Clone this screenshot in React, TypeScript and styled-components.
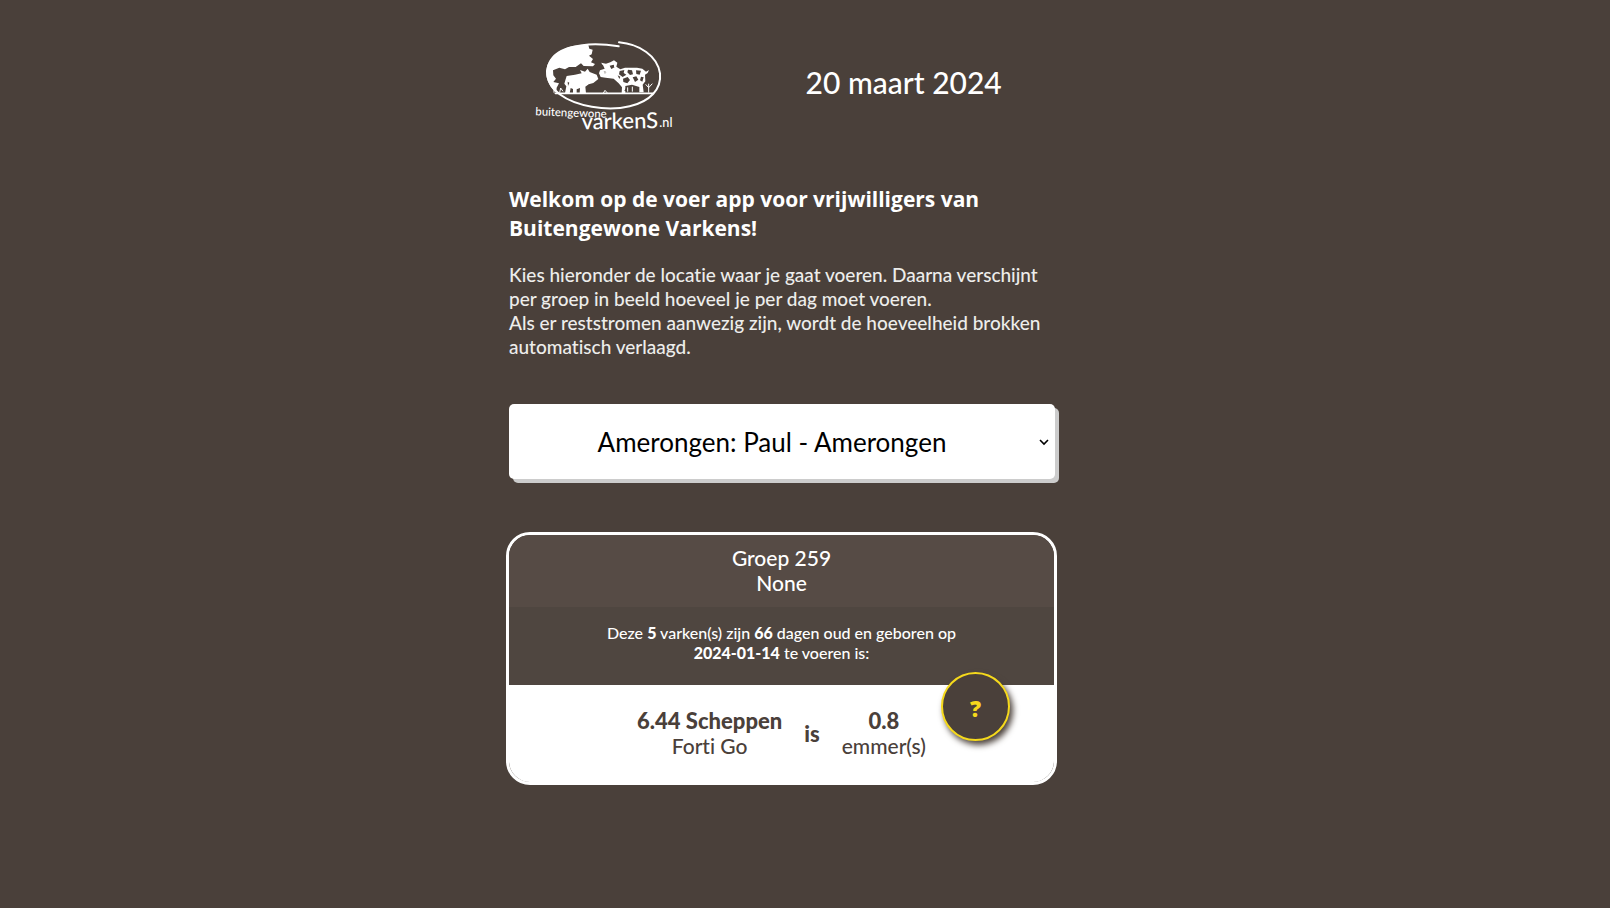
import React, { useState } from "react";
import styled, { createGlobalStyle } from "styled-components";

const brown = "#4a403a";
const yellow = "#f5d91c";
const bodyFont = `"Gill Sans MT", Lato, "Liberation Sans", sans-serif`;
const headingFont = `"Segoe UI", "Open Sans", "Noto Sans", sans-serif`;

const GlobalStyle = createGlobalStyle`
  *, *::before, *::after { box-sizing: border-box; }
  body {
    margin: 0;
    background: ${brown};
    color: #fff;
    font-family: ${bodyFont};
    font-weight: 500;
    font-variant-ligatures: none;
  }
`;

const Page = styled.div`
  max-width: 592px;
  margin: 0 auto;
  padding: 30px 0;
`;

const Header = styled.header`
  display: grid;
  grid-template-columns: 1fr 2fr;
  justify-items: center;
  align-items: center;
  height: 104px;
`;

const LogoDrawing = styled.svg`
  display: block;
  width: 170px;
  height: 104px;
`;

const CurrentDate = styled.time`
  font-size: 30px;
  line-height: 38px;
`;

const Main = styled.main`
  padding-top: 51px;
  padding-right: 46px;
`;

const Title = styled.h1`
  margin: 0 0 20px;
  font-family: ${headingFont};
  font-size: 21px;
  line-height: 29px;
  font-weight: 700;
`;

const Intro = styled.p`
  margin: 0;
  font-size: 19px;
  line-height: 24px;
  color: #ededeb;
`;

const SelectField = styled.div`
  position: relative;
  margin: 45px 0 53px;
`;

const LocationSelect = styled.select`
  display: block;
  width: 100%;
  height: 75px;
  padding: 0 20px 0 0;
  border: 0;
  border-radius: 5px;
  appearance: none;
  background: #fff;
  box-shadow: 4px 4px 0 #ccc;
  color: #000;
  font-family: ${bodyFont};
  font-size: 26px;
  text-align: center;
  text-align-last: center;
`;

const Chevron = styled.svg`
  position: absolute;
  top: 33px;
  right: 6px;
  width: 10px;
  height: 10px;
  pointer-events: none;
`;

const Card = styled.article`
  position: relative;
  margin: 0 -2px 0 -3px;
  border: 3px solid #fff;
  border-radius: 24px;
  text-align: center;
`;

const CardHeader = styled.header`
  padding: 10px 16px 12px;
  border-radius: 21px 21px 0 0;
  background: #564b45;
  font-size: 21px;
  line-height: 25px;
`;

const GroupName = styled.h2`
  margin: 0;
  font-size: inherit;
  font-weight: inherit;
`;

const GroupNote = styled.div``;

const CardInfo = styled.p`
  margin: 0;
  padding: 16px 80px 22px;
  background: #4f4640;
  font-size: 16px;
  line-height: 20px;

  b {
    font-weight: 900;
  }
`;

const Feeding = styled.div`
  display: flex;
  justify-content: center;
  align-items: center;
  gap: 22px;
  padding: 23px 16px 24px;
  border-radius: 0 0 21px 21px;
  background: #fff;
  color: ${brown};
  font-size: 21px;
  line-height: 25px;
`;

const Amount = styled.div``;

const Strong = styled.strong`
  display: block;
  font-size: 22px;
  font-weight: 900;
`;

const HelpButton = styled.button`
  position: absolute;
  right: 44px;
  bottom: 41px;
  width: 69px;
  height: 69px;
  padding: 4px 0 0;
  border: 2px solid ${yellow};
  border-radius: 50%;
  background: ${brown};
  box-shadow: 3px 4px 6px ${brown};
  color: ${yellow};
  font-family: ${headingFont};
  font-size: 22px;
  line-height: 25px;
  font-weight: 800;
  cursor: pointer;
`;

const Logo = () => (
  <LogoDrawing viewBox="8 0 510 312" role="img" aria-label="Buitengewone Varkens">
    <g fill="none" stroke="#fff" strokeLinecap="round" strokeLinejoin="round">
      <path d="M295 49C220 37 142 42 104 78C64 116 78 162 118 193C165 228 258 246 328 229C389 214 424 178 419 130C411 77 358 43 296 37" strokeWidth="6" />
      <path d="M105 190H398" strokeWidth="5" />
    </g>
    <path
      fill="#fff"
      d="M78 122C84 68 135 42 204 45L207 56L217 59L214 73L206 77L218 87L212 97L224 102L218 109L190 108L182 100L166 111L146 111L134 118L117 113L98 121L99 136L107 146L99 156L116 160L109 173L108 188C91 174 76 150 78 122Z"
    />
    <path
      fill="#fff"
      d="M135 151L139 138L164 134L184 130L179 120L194 125L202 116L208 126L229 134L234 147L219 159L205 163L195 170L197 190H178L179 174L169 178V190H158V177L151 174L148 190H134L138 169L132 161Z"
    />
    <path
      fill="#fff"
      d="M236 130L239 121L253 116L248 105L242 98L257 101L270 97L281 91L291 98L288 110L300 118L314 113H350L366 116L377 125L386 120L382 129L374 134L375 154L367 164L370 187H357V171L335 164L315 168V189H304L305 172L295 160L280 146L256 143L241 141Z"
    />
    <g fill="#4a403a">
      <path d="M268 107l12 -3 3 8 -10 5zM298 123l14 -3 -2 9 8 5 -11 7 -11 -8zM323 119l12 2 3 12 -9 2 -8 -8zM347 121l15 1 -4 12 -10 -2zM308 146l14 -5 7 9 -8 10 -12 -4zM337 142l11 -3 6 10 -10 7zM362 140l8 2 -4 13 -7 -4zM250 124l8 2 -4 5zM292 136l8 4 -3 7zM142 155l5 3 -4 10z" />
      <path d="M117 128l12 6 -2 12 -11 -5zM312 183l6 -11h29l8 13z" />
    </g>
    <g fill="none" stroke="#fff" strokeWidth="3">
      <path d="M101 188v-27m0 10l-8 -10m8 10l10 -10M118 188l3 -14 7 10M385 188v-27m0 12l-9 -10m9 10l11 -12M249 189l5 -8 7 8M322 185v-13m14 13v-15" />
      <path d="M241 127q12 -4 20 5q8 5 18 0M245 101l12 8m29 -12l-4 15" />
    </g>
    <g fill="#fff" fontFamily={bodyFont}>
      <text x="45" y="256" fontSize="34" transform="rotate(2 45 256)">buitengewone</text>
      <text x="184" y="298" fontSize="66" transform="rotate(-1 184 298)">varkenS</text>
      <text x="417" y="291" fontSize="38">.nl</text>
    </g>
  </LogoDrawing>
);

export default function App() {
  const [location, setLocation] = useState("paul");
  return (
    <>
      <GlobalStyle />
      <Page>
        <Header>
          <Logo />
          <CurrentDate dateTime="2024-03-20">20 maart 2024</CurrentDate>
        </Header>
        <Main>
          <Title>Welkom op de voer app voor vrijwilligers van Buitengewone Varkens!</Title>
          <Intro>
            Kies hieronder de locatie waar je gaat voeren. Daarna verschijnt
            <br />
            per groep in beeld hoeveel je per dag moet voeren.
            <br />
            Als er reststromen aanwezig zijn, wordt de hoeveelheid brokken
            <br />
            automatisch verlaagd.
          </Intro>
          <SelectField>
            <LocationSelect
              aria-label="Locatie"
              value={location}
              onChange={(event) => setLocation(event.target.value)}
            >
              <option value="paul">Amerongen: Paul - Amerongen</option>
            </LocationSelect>
            <Chevron viewBox="0 0 10 10" aria-hidden="true">
              <path d="M1 3L5 7L9 3" fill="none" stroke="#000" strokeWidth="1.6" />
            </Chevron>
          </SelectField>
          <Card>
            <CardHeader>
              <GroupName>Groep 259</GroupName>
              <GroupNote>None</GroupNote>
            </CardHeader>
            <CardInfo>
              Deze <b>5</b> varken(s) zijn <b>66</b> dagen oud en geboren op
              <br />
              <b>2024-01-14</b> te voeren is:
            </CardInfo>
            <Feeding>
              <Amount>
                <Strong>6.44 Scheppen</Strong>
                Forti Go
              </Amount>
              <Strong>is</Strong>
              <Amount>
                <Strong>0.8</Strong>
                emmer(s)
              </Amount>
            </Feeding>
            <HelpButton type="button">?</HelpButton>
          </Card>
        </Main>
      </Page>
    </>
  );
}
